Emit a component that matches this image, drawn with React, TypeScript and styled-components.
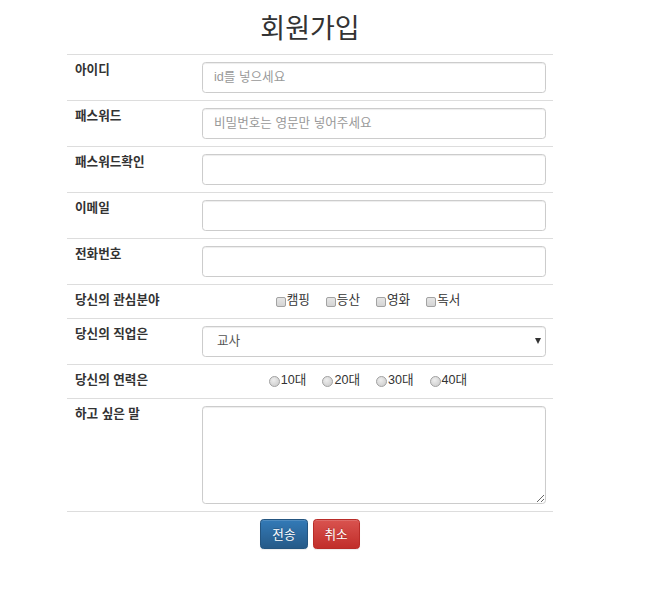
import React from "react";
import styled, { createGlobalStyle } from "styled-components";

const Global = createGlobalStyle`
  html, body { margin: 0; padding: 0; background: #fff; }
  body {
    font-family: "Liberation Sans", "Noto Sans CJK KR", sans-serif;
    font-size: 12.6px;
    line-height: 1.42857;
    color: #333;
  }
  * { box-sizing: border-box; }
`;

const Container = styled.div`
  width: 486px;
  margin-left: 67px;
`;

const Title = styled.h2`
  margin: 15px 0 9px;
  text-align: center;
  font-size: 27px;
  font-weight: 400;
  line-height: 1.1;
  color: #333;
`;

const Table = styled.table`
  width: 100%;
  border-collapse: collapse;
  border-spacing: 0;
`;

const Row = styled.tr``;

const LabelCell = styled.th`
  width: 128px;
  padding: 7px 7px 7px 8px;
  border-top: 1px solid #ddd;
  text-align: left;
  vertical-align: top;
  font-weight: bold;
  white-space: nowrap;
`;

const FieldCell = styled.td<{ $center?: boolean }>`
  padding: 7px 7px 7px 7px;
  border-top: 1px solid #ddd;
  vertical-align: top;
  text-align: ${(p) => (p.$center ? "center" : "left")};
`;

const FooterCell = styled.td`
  padding: 7px;
  border-top: 1px solid #ddd;
`;

const TextInput = styled.input`
  display: block;
  width: 100%;
  height: 31px;
  padding: 5px 11px;
  font-family: inherit;
  font-size: 12.6px;
  color: #555;
  background: #fff;
  border: 1px solid #ccc;
  border-radius: 3.6px;
  box-shadow: inset 0 1px 1px rgba(0, 0, 0, 0.075);
  outline: none;
  &::placeholder { color: #999; }
`;

const SelectWrap = styled.div`
  position: relative;
`;

const Select = styled.select`
  display: block;
  width: 100%;
  height: 31px;
  padding: 5px 14px;
  font-family: inherit;
  font-size: 12.6px;
  color: #555;
  background: #fff;
  border: 1px solid #ccc;
  border-radius: 3.6px;
  box-shadow: inset 0 1px 1px rgba(0, 0, 0, 0.075);
  appearance: none;
  -webkit-appearance: none;
  outline: none;
`;

const Caret = styled.span`
  position: absolute;
  right: 5px;
  top: 12px;
  width: 0;
  height: 0;
  border-left: 3.5px solid transparent;
  border-right: 3.5px solid transparent;
  border-top: 6px solid #333;
  pointer-events: none;
`;

const TextArea = styled.textarea`
  display: block;
  width: 100%;
  height: 98px;
  padding: 5px 11px;
  font-family: inherit;
  font-size: 12.6px;
  border: 1px solid #ccc;
  border-radius: 3.6px;
  box-shadow: inset 0 1px 1px rgba(0, 0, 0, 0.075);
  outline: none;
`;

const Group = styled.div`
  display: flex;
  justify-content: center;
  align-items: center;
  min-height: 19px;
  gap: 16px;
  padding-right: 12px;
`;

const Choice = styled.label`
  display: inline-flex;
  align-items: center;
  gap: 1px;
  font-weight: normal;
  color: #333;
`;

const Check = styled.input`
  appearance: none;
  -webkit-appearance: none;
  margin: 1px 0 0;
  width: 10px;
  height: 10px;
  border: 1px solid #a3a3a3;
  border-radius: 2px;
  background: linear-gradient(#e6e6e6, #d4d4d4);
`;

const Radio = styled.input`
  appearance: none;
  -webkit-appearance: none;
  margin: 1px 0 0;
  width: 11px;
  height: 11px;
  border: 1px solid #a3a3a3;
  border-radius: 50%;
  background: radial-gradient(circle at 40% 35%, #eee, #c8c8c8);
`;

const Buttons = styled.div`
  display: flex;
  justify-content: center;
  gap: 5px;
`;

const Button = styled.button<{ $variant: "primary" | "danger" }>`
  height: 30px;
  padding: 0 11px;
  font-family: inherit;
  font-size: 12.6px;
  color: #fff;
  border-radius: 3.6px;
  text-shadow: 0 -1px 0 rgba(0, 0, 0, 0.2);
  box-shadow: inset 0 1px 0 rgba(255, 255, 255, 0.15), 0 1px 1px rgba(0, 0, 0, 0.075);
  cursor: pointer;
  border: 1px solid ${(p) => (p.$variant === "primary" ? "#245580" : "#b92c28")};
  background: ${(p) =>
    p.$variant === "primary"
      ? "linear-gradient(to bottom, #337ab7 0%, #265a88 100%)"
      : "linear-gradient(to bottom, #d9534f 0%, #c12e2a 100%)"};
`;

const hobbies = ["캠핑", "등산", "영화", "독서"];
const ages = ["10대", "20대", "30대", "40대"];

export default function App() {
  return (
    <>
      <Global />
      <Container>
        <Title>회원가입</Title>
        <form>
          <Table>
            <tbody>
              <Row>
                <LabelCell>아이디</LabelCell>
                <FieldCell>
                  <TextInput placeholder="id를 넣으세요" />
                </FieldCell>
              </Row>
              <Row>
                <LabelCell>패스워드</LabelCell>
                <FieldCell>
                  <TextInput type="password" placeholder="비밀번호는 영문만 넣어주세요" />
                </FieldCell>
              </Row>
              <Row>
                <LabelCell>패스워드확인</LabelCell>
                <FieldCell>
                  <TextInput type="password" />
                </FieldCell>
              </Row>
              <Row>
                <LabelCell>이메일</LabelCell>
                <FieldCell>
                  <TextInput />
                </FieldCell>
              </Row>
              <Row>
                <LabelCell>전화번호</LabelCell>
                <FieldCell>
                  <TextInput />
                </FieldCell>
              </Row>
              <Row>
                <LabelCell>당신의 관심분야</LabelCell>
                <FieldCell $center>
                  <Group>
                    {hobbies.map((h) => (
                      <Choice key={h}>
                        <Check type="checkbox" name="hobby" />
                        {h}
                      </Choice>
                    ))}
                  </Group>
                </FieldCell>
              </Row>
              <Row>
                <LabelCell>당신의 직업은</LabelCell>
                <FieldCell>
                  <SelectWrap>
                    <Select defaultValue="교사">
                      <option>교사</option>
                      <option>학생</option>
                      <option>회사원</option>
                    </Select>
                    <Caret />
                  </SelectWrap>
                </FieldCell>
              </Row>
              <Row>
                <LabelCell>당신의 연력은</LabelCell>
                <FieldCell $center>
                  <Group>
                    {ages.map((a) => (
                      <Choice key={a}>
                        <Radio type="radio" name="age" />
                        {a}
                      </Choice>
                    ))}
                  </Group>
                </FieldCell>
              </Row>
              <Row>
                <LabelCell>하고 싶은 말</LabelCell>
                <FieldCell>
                  <TextArea />
                </FieldCell>
              </Row>
              <Row>
                <FooterCell colSpan={2}>
                  <Buttons>
                    <Button type="submit" $variant="primary">전송</Button>
                    <Button type="reset" $variant="danger">취소</Button>
                  </Buttons>
                </FooterCell>
              </Row>
            </tbody>
          </Table>
        </form>
      </Container>
    </>
  );
}
